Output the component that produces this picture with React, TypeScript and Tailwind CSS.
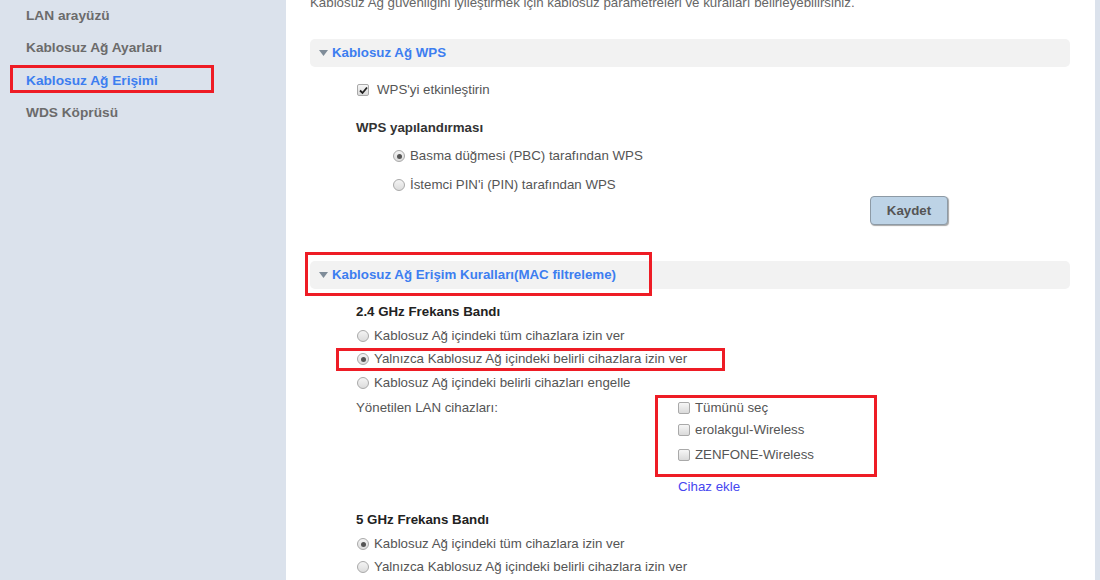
import React from 'react';

const sideItems = ['LAN arayüzü', 'Kablosuz Ağ Ayarları', 'Kablosuz Ağ Erişimi', 'WDS Köprüsü'];

function Radio({ checked }: { checked?: boolean }) {
  return (
    <span className="w-[12px] h-[12px] rounded-full border border-[#a9a9a9] bg-gradient-to-b from-[#f4f4f4] to-[#dcdcdc] flex items-center justify-center shrink-0">
      {checked && <span className="w-[5px] h-[5px] rounded-full bg-[#555]" />}
    </span>
  );
}

function Check({ checked }: { checked?: boolean }) {
  return (
    <span className="w-[12px] h-[12px] rounded-[2px] border border-[#a9a9a9] bg-gradient-to-b from-[#f6f6f6] to-[#dadada] flex items-center justify-center shrink-0">
      {checked && (
        <svg width="9" height="9" viewBox="0 0 9 9">
          <path d="M1 4.5 L3.5 7 L8 1.5" stroke="#222" strokeWidth="1.8" fill="none" />
        </svg>
      )}
    </span>
  );
}

function SectionHeader({ title }: { title: string }) {
  return (
    <div className="h-[28px] bg-[#f2f2f2] rounded-[5px] flex items-center gap-[4px] pl-[9px]">
      <svg width="9" height="6" viewBox="0 0 9 6">
        <path d="M0 0 L9 0 L4.5 6 Z" fill="#7f8c99" />
      </svg>
      <span className="text-[13.3px] font-bold text-[#3d7ef0]">{title}</span>
    </div>
  );
}

function RadioRow({ label, checked, mt, ml }: { label: string; checked?: boolean; mt: string; ml: string }) {
  return (
    <div className={`h-[20px] flex items-center gap-[5px] ${mt} ${ml}`}>
      <Radio checked={checked} />
      <span>{label}</span>
    </div>
  );
}

export default function App() {
  return (
    <div className="relative w-[1100px] h-[580px] overflow-hidden flex bg-white text-[13.3px] text-[#555] [font-family:'Liberation_Sans',Arial,sans-serif]">
      <aside className="w-[286px] shrink-0 bg-[#dbe2ec] pl-[26px]">
        {sideItems.map((item, i) => (
          <div
            key={item}
            className={`h-[32.4px] flex items-center font-bold text-[13.7px] ${i === 2 ? 'text-[#3d7ef0]' : 'text-[#6b6b6b]'}`}
          >
            {item}
          </div>
        ))}
      </aside>

      <main className="flex-1 pl-[24px] pr-[25px]">
        <div className="h-[16px] mt-[-5px] leading-[16px] text-[#666] whitespace-nowrap">
          Kablosuz Ağ güvenliğini iyileştirmek için kablosuz parametreleri ve kuralları belirleyebilirsiniz.
        </div>

        <div className="mt-[28px]">
          <SectionHeader title="Kablosuz Ağ WPS" />
        </div>

        <div className="h-[20px] mt-[13px] ml-[47px] flex items-center gap-[8px]">
          <Check checked />
          <span>WPS'yi etkinleştirin</span>
        </div>

        <div className="h-[20px] mt-[18px] ml-[46px] flex items-center font-bold text-[#333]">
          WPS yapılandırması
        </div>
        <RadioRow label="Basma düğmesi (PBC) tarafından WPS" checked mt="mt-[8px]" ml="ml-[83px]" />
        <RadioRow label="İstemci PIN'i (PIN) tarafından WPS" mt="mt-[9px]" ml="ml-[83px]" />

        <div className="mt-[1px] ml-[560px]">
          <button className="w-[78px] h-[29px] rounded-[4px] border border-[#8d9aa5] bg-[#bdd3e6] shadow-[1px_1px_1px_rgba(0,0,0,0.35)] font-bold text-[13.3px] text-[#555]">
            Kaydet
          </button>
        </div>

        <div className="mt-[36px]">
          <SectionHeader title="Kablosuz Ağ Erişim Kuralları(MAC filtreleme)" />
        </div>

        <div className="h-[20px] mt-[13px] ml-[46px] flex items-center font-bold text-[#222]">
          2.4 GHz Frekans Bandı
        </div>
        <RadioRow label="Kablosuz Ağ içindeki tüm cihazlara izin ver" mt="mt-[4px]" ml="ml-[47px]" />
        <RadioRow label="Yalnızca Kablosuz Ağ içindeki belirli cihazlara izin ver" checked mt="mt-[3px]" ml="ml-[47px]" />
        <RadioRow label="Kablosuz Ağ içindeki belirli cihazları engelle" mt="mt-[4px]" ml="ml-[47px]" />

        <div className="mt-[5px] ml-[46px] flex">
          <div className="w-[322px] h-[20px] flex items-center">Yönetilen LAN cihazları:</div>
          <div className="flex flex-col">
            <div className="h-[20px] flex items-center gap-[5px]">
              <Check />
              <span>Tümünü seç</span>
            </div>
            <div className="h-[20px] mt-[2px] flex items-center gap-[5px]">
              <Check />
              <span>erolakgul-Wireless</span>
            </div>
            <div className="h-[20px] mt-[5px] flex items-center gap-[5px]">
              <Check />
              <span>ZENFONE-Wireless</span>
            </div>
            <div className="h-[20px] mt-[12px] flex items-center text-[#4646f0]">Cihaz ekle</div>
          </div>
        </div>

        <div className="h-[20px] mt-[13px] ml-[46px] flex items-center font-bold text-[#222]">
          5 GHz Frekans Bandı
        </div>
        <RadioRow label="Kablosuz Ağ içindeki tüm cihazlara izin ver" checked mt="mt-[4px]" ml="ml-[47px]" />
        <RadioRow label="Yalnızca Kablosuz Ağ içindeki belirli cihazlara izin ver" mt="mt-[3px]" ml="ml-[47px]" />
      </main>

      <div className="w-[5px] shrink-0 bg-[#dbe2ec]" />

      {/* annotation boxes */}
      <div className="absolute left-[10px] top-[65px] w-[204px] h-[28px] border-[3px] border-[#ee1c25]" />
      <div className="absolute left-[305px] top-[252px] w-[347px] h-[44px] border-[3px] border-[#ee1c25]" />
      <div className="absolute left-[336px] top-[348px] w-[389px] h-[23px] border-[3px] border-[#ee1c25]" />
      <div className="absolute left-[655px] top-[395px] w-[222px] h-[82px] border-[3px] border-[#ee1c25]" />
    </div>
  );
}
